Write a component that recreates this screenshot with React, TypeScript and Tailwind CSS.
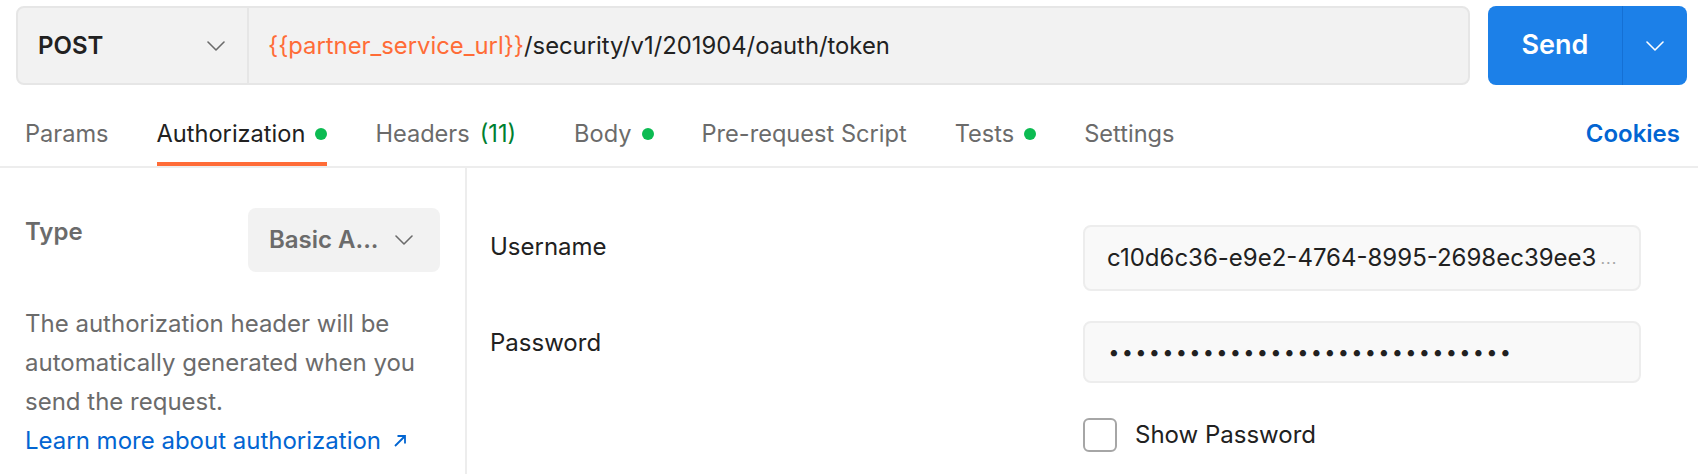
import React from "react";

const Chevron = ({ className }: { className?: string }) => (
  <svg viewBox="0 0 18 10" className={className} fill="none">
    <path d="M1 1l8 8 8-8" stroke="currentColor" strokeWidth="1.6" strokeLinecap="round" strokeLinejoin="round" />
  </svg>
);

const Dot = () => <span className="inline-block w-[12px] h-[12px] rounded-full bg-[#0cbb52] ml-[10px]" />;

type Tab = { label: string; count?: string; dot?: boolean; active?: boolean; extra?: string };

const tabs: Tab[] = [
  { label: "Params" },
  { label: "Authorization", dot: true, active: true },
  { label: "Headers", count: "(11)" },
  { label: "Body", dot: true, extra: "ml-[10px]" },
  { label: "Pre-request Script" },
  { label: "Tests", dot: true },
  { label: "Settings" },
];

function TopBar() {
  return (
    <div className="flex pl-[16px] pr-[11px] pt-[6px] gap-[18px]">
      <div className="flex-1 h-[79px] flex bg-[#f2f2f2] border-2 border-[#e6e6e6] rounded-[8px]">
        <div className="w-[231px] flex items-center justify-between pl-[20px] pr-[22px] border-r-2 border-[#e6e6e6]">
          <span className="text-[24px] font-semibold text-[#212121]">POST</span>
          <Chevron className="w-[18px] h-[10px] text-[#6b6b6b]" />
        </div>
        <div className="flex items-center pl-[19px] text-[23.8px] text-[#212121]">
          <span className="text-[#ff6c37]">{"{{partner_service_url}}"}</span>
          <span>/security/v1/201904/oauth/token</span>
        </div>
      </div>
      <div className="w-[199px] h-[79px] flex rounded-[8px] bg-[#1c80e8] text-white">
        <div className="w-[135px] flex items-center justify-center border-r border-[#1570d4] text-[27px] font-semibold">
          Send
        </div>
        <div className="flex-1 flex items-center justify-center">
          <Chevron className="w-[18px] h-[10px] text-white" />
        </div>
      </div>
    </div>
  );
}

function TabBar() {
  return (
    <div className="flex items-end justify-between h-[83px] border-b-2 border-[#ededed] pl-[25px] pr-[18px]">
      <div className="flex gap-[48px]">
        {tabs.map((t) => (
          <div key={t.label} className={`flex flex-col ${t.extra ?? ""}`}>
            <div
              className={`flex items-center h-[29px] text-[23.6px] leading-[29px] ${
                t.active ? "text-[#212121]" : "text-[#6b6b6b]"
              }`}
            >
              <span>{t.label}</span>
              {t.count && <span className="ml-[10px] text-[#007f31]">{t.count}</span>}
              {t.dot && <Dot />}
            </div>
            <div className={`mt-[14px] h-[4px] ${t.active ? "bg-[#ff6c37]" : "bg-transparent"}`} />
          </div>
        ))}
      </div>
      <div className="flex flex-col">
        <span className="text-[24px] leading-[29px] font-semibold text-[#0265d2]">Cookies</span>
        <div className="mt-[14px] h-[4px]" />
      </div>
    </div>
  );
}

function LeftPanel() {
  return (
    <div className="w-[467px] shrink-0 border-r-2 border-[#ededed] pl-[25px] pr-[25px] pt-[40px]">
      <div className="flex justify-between items-start">
        <span className="mt-[9px] text-[24px] leading-[29px] font-semibold text-[#6b6b6b]">Type</span>
        <div className="w-[192px] h-[64px] rounded-[8px] bg-[#f2f2f2] flex items-center justify-between pl-[21px] pr-[27px]">
          <span className="text-[24px] font-semibold text-[#6b6b6b]">Basic A...</span>
          <Chevron className="w-[18px] h-[10px] text-[#6b6b6b]" />
        </div>
      </div>
      <p className="mt-[32px] text-[24px] leading-[39px] text-[#6b6b6b]">
        The authorization header will be automatically generated when you send the request.
      </p>
      <a className="flex items-center text-[24px] leading-[39px] text-[#0265d2]">
        Learn more about authorization
        <svg viewBox="0 0 14 14" className="w-[14px] h-[14px] ml-[12px]" fill="none">
          <path d="M2 12L12 2M4.5 2H12v7.5" stroke="currentColor" strokeWidth="1.8" />
        </svg>
      </a>
    </div>
  );
}

function RightPanel() {
  return (
    <div className="flex-1 pl-[23px] pr-[57px] pt-[57px]">
      <div className="flex items-start">
        <span className="flex-1 text-[24px] leading-[44px] text-[#212121]">Username</span>
        <div className="w-[558px] h-[66px] rounded-[8px] bg-[#f9f9f9] border-2 border-[#ededed] pl-[22px] flex items-center text-[24px] text-[#212121]">
          <span>c10d6c36-e9e2-4764-8995-2698ec39ee3</span>
          <span className="ml-[4px] text-[16px] text-[#a6a6a6] tracking-[1px]">...</span>
        </div>
      </div>
      <div className="flex items-start mt-[30px]">
        <span className="flex-1 text-[24px] leading-[44px] text-[#212121]">Password</span>
        <div className="w-[558px] h-[62px] rounded-[8px] bg-[#f9f9f9] border-2 border-[#ededed] pl-[22px] flex items-center text-[20px] text-[#212121]">
          {Array.from({ length: 30 }).map((_, i) => (
            <span key={i} className="inline-block w-[13.5px] text-center leading-none">
              •
            </span>
          ))}
        </div>
      </div>
      <div className="flex mt-[34px]">
        <div className="flex-1" />
        <div className="w-[558px] flex items-center">
          <span className="w-[34px] h-[34px] rounded-[6px] border-2 border-[#a6a6a6] bg-white" />
          <span className="ml-[18px] text-[24px] text-[#212121]">Show Password</span>
        </div>
      </div>
    </div>
  );
}

export default function App() {
  return (
    <div className="w-full h-[474px] bg-white overflow-hidden font-['Inter',sans-serif]">
      <TopBar />
      <TabBar />
      <div className="flex h-[306px]">
        <LeftPanel />
        <RightPanel />
      </div>
    </div>
  );
}
